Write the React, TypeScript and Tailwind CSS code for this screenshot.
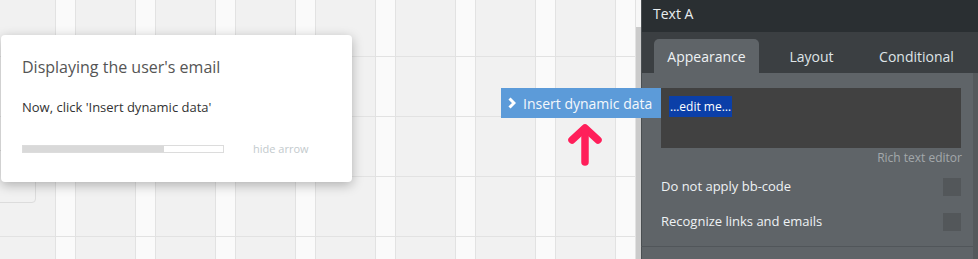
import React from "react";

const cols = Array.from({ length: 8 });
const rows = Array.from({ length: 5 });

export default function App() {
  return (
    <div
      className="relative flex h-[259px] w-[978px] overflow-hidden bg-[#f1f1f1]"
      style={{ fontFamily: '"Open Sans", "Liberation Sans", sans-serif' }}
    >
      {/* canvas */}
      <div className="relative h-full w-[636px] overflow-hidden">
        <div className="flex h-full">
          <div className="h-full w-[55px] shrink-0" />
          {cols.map((_, i) => (
            <div key={i} className="flex h-full shrink-0">
              <div className="h-full w-[21px] border-x border-[#e2e2e2] bg-[#fafafa]" />
              <div className="h-full w-[59px]" />
            </div>
          ))}
        </div>
        <div className="absolute inset-0 flex flex-col">
          <div className="h-[57px] shrink-0 border-b border-[#e2e2e2]" />
          {rows.map((_, i) => (
            <div key={i} className="h-[60px] shrink-0 border-b border-[#e2e2e2]" />
          ))}
        </div>
        {/* element behind the card */}
        <div className="absolute left-[-6px] top-[150px] h-[53px] w-[42px] rounded-[4px] border border-[#dcdcdc] bg-[#f1f1f1]" />
      </div>

      {/* scrollbar */}
      <div className="flex h-full w-[5px] flex-col">
        <div className="h-[27px] bg-[#f7f7f7]" />
        <div className="flex-1 bg-[#cbcbcb]" />
      </div>

      {/* right panel */}
      <div className="flex h-full w-[337px] flex-col border-l border-[#4a4f52] bg-[#5f6468]">
        <div className="flex h-[32px] items-center bg-[#2a2f32] pb-[5px] pl-[11px] text-[14px] text-[#e9eef0]">
          Text A
        </div>
        <div className="flex h-[41px] items-end bg-[#3b3f42] pl-[12px]">
          <div className="flex h-[34px] w-[105px] items-center justify-center rounded-t-[5px] bg-[#5f6468] text-[14px] text-[#eef2f4]">
            Appearance
          </div>
          <div className="flex h-[34px] w-[105px] items-center justify-center text-[14px] text-[#dfe4e7]">
            Layout
          </div>
          <div className="flex h-[34px] w-[105px] items-center justify-center text-[14px] text-[#dfe4e7]">
            Conditional
          </div>
        </div>
        <div className="flex flex-1">
          <div className="flex flex-1 flex-col pl-[19px] pr-[11px] pt-[15px]">
            <div className="h-[60px] w-[300px] bg-[#414141] pl-[8px] pt-[5px]">
              <span className="bg-[#0b3fa8] px-px py-[2px] text-[12px] leading-[18px] text-white">
                …edit me…
              </span>
            </div>
            <div className="mt-[1px] flex justify-end text-[12px] leading-[18px] text-[#a3a8ab]">
              Rich text editor
            </div>
            <div className="mt-[11px] flex h-[18px] items-center justify-between">
              <span className="text-[13px] text-[#eef2f4]">Do not apply bb-code</span>
              <div className="mr-[1px] h-[18px] w-[18px] bg-[#53575a]" />
            </div>
            <div className="mt-[17px] flex h-[18px] items-center justify-between">
              <span className="text-[13px] text-[#eef2f4]">Recognize links and emails</span>
              <div className="mr-[1px] h-[18px] w-[18px] bg-[#53575a]" />
            </div>
            <div className="ml-[-20px] mr-[-11px] mt-[15px] border-b border-[#51565a]" />
          </div>
          <div className="w-[5px] bg-[#55595c]" />
        </div>
      </div>

      {/* tutorial card */}
      <div className="absolute left-[1px] top-[35px] h-[147px] w-[351px] rounded-[4px] bg-white px-[21px] shadow-[0_3px_12px_rgba(0,0,0,0.28)]">
        <div className="mt-[20px] text-[16px] leading-[24px] text-[#555]">
          Displaying the user's email
        </div>
        <div className="mt-[19px] text-[13px] leading-[18px] text-[#333]">
          Now, click 'Insert dynamic data'
        </div>
        <div className="mt-[25px] flex items-center">
          <div className="flex h-[8px] w-[202px] border border-[#dcdcdc]">
            <div className="h-full w-[141px] bg-[#d9d9d9]" />
          </div>
          <div className="ml-[29px] text-[11px] text-[#c3cacd]">hide arrow</div>
        </div>
      </div>

      {/* insert dynamic data button */}
      <div className="absolute left-[501px] top-[88px] flex h-[30px] w-[160px] items-center bg-[#5c9bd9] pl-[7px] text-[14px] text-[#f4f8fc]">
        <svg width="8" height="12" viewBox="0 0 8 12" className="mr-[7px]">
          <polyline points="1.5,1.5 6,6 1.5,10.5" fill="none" stroke="white" strokeWidth="3" />
        </svg>
        Insert dynamic data
      </div>

      {/* pink arrow */}
      <svg
        className="absolute left-[566px] top-[122px]"
        width="38"
        height="46"
        viewBox="0 0 38 46"
      >
        <g fill="none" stroke="#ff1f5a" strokeWidth="7.5" strokeLinecap="round" strokeLinejoin="round">
          <polyline points="6,18 19,6 32,18" />
          <line x1="19" y1="7" x2="19" y2="40" />
        </g>
      </svg>
    </div>
  );
}
